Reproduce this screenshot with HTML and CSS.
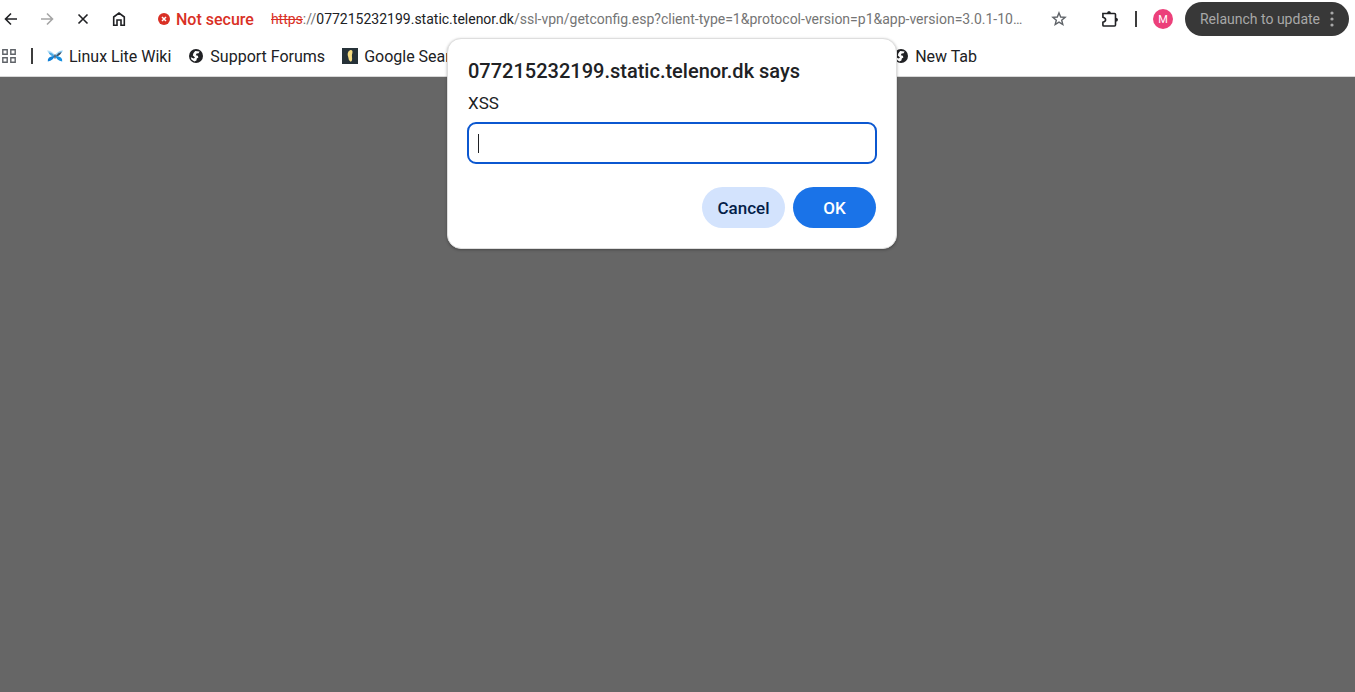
FILE: index.html
```html
<!DOCTYPE html>
<html lang="en">
  <head>
    <meta charset="UTF-8" />
    <meta name="viewport" content="width=device-width, initial-scale=1.0" />
    <title>077215232199.static.telenor.dk</title>
    <link rel="stylesheet" href="styles.css" />
  </head>

  <body>
    <svg class="sprite" aria-hidden="true">
      <symbol id="globe" viewBox="0 0 16 16">
        <circle cx="8" cy="8" r="7" fill="#202124" />
        <path
          d="M7.2 3L11.6 3.6L10.6 5.2L8.6 5.6L7.8 7.2L9.8 7.8L10.4 9.4L8.8 10.6L8.4 12.6L6.4 13.4L3.4 11.4L2.8 9.2L5.8 10.4L7 9.4L4.8 7.6L5.4 5.2Z"
          fill="#fff"
        />
      </symbol>
    </svg>

    <header class="browser">
      <div class="toolbar">
        <nav class="nav-buttons">
          <button class="icon-btn" aria-label="Back">
            <svg width="16" height="16" viewBox="0 0 16 16">
              <path d="M14 8H3M8 2.5L2.5 8L8 13.5" />
            </svg>
          </button>
          <button class="icon-btn icon-disabled" aria-label="Forward" disabled>
            <svg width="16" height="16" viewBox="0 0 16 16">
              <path d="M2 8H13M8 2.5L13.5 8L8 13.5" />
            </svg>
          </button>
          <button class="icon-btn" aria-label="Stop">
            <svg width="16" height="16" viewBox="0 0 16 16">
              <path d="M3.5 3.5L12.5 12.5M12.5 3.5L3.5 12.5" />
            </svg>
          </button>
          <button class="icon-btn" aria-label="Home">
            <svg width="16" height="16" viewBox="0 0 16 16">
              <path d="M2.7 6L8 2L13.3 6V14.2H10V9H6V14.2H2.7Z" />
            </svg>
          </button>
        </nav>

        <div class="address">
          <button class="security">
            <svg width="12" height="12" viewBox="0 0 12 12">
              <circle cx="6" cy="6" r="6" fill="#d93025" />
              <path d="M4 4L8 8M8 4L4 8" stroke="#fff" stroke-width="1.5" />
            </svg>
            Not secure
          </button>
          <p class="url"><s>https</s>://<span class="url-host">077215232199.static.telenor.dk</span>/ssl-vpn/getconfig.esp?client-type=1&amp;protocol-version=p1&amp;app-version=3.0.1-10…</p>
          <button class="icon-btn icon-star" aria-label="Bookmark this tab">
            <svg width="16" height="16" viewBox="0 0 16 16">
              <path
                d="M8 1.9L9.7 6L14.1 6.3L10.7 9.2L11.8 13.6L8 11.2L4.2 13.6L5.3 9.2L1.9 6.3L6.3 6Z"
              />
            </svg>
          </button>
        </div>

        <div class="actions">
          <button class="icon-btn" aria-label="Extensions">
            <svg width="18" height="18" viewBox="0 0 18 18">
              <path
                d="M2 3.5H13.5Q14.5 3.5 14.5 4.5V15Q14.5 16 13.5 16H2.7Q1.9 16 1.9 15.2V12.2Q4.6 11.6 4.6 9.7Q4.6 7.8 1.9 7.2V3.5Z"
              />
              <path
                class="solid"
                d="M6 3.5Q6 1 8 1Q10 1 10 3.5ZM14.5 7.7Q17 7.7 17 9.7Q17 11.7 14.5 11.7Z"
              />
            </svg>
          </button>
          <span class="divider"></span>
          <button class="avatar">M</button>
          <button class="relaunch">
            Relaunch to update
            <svg width="4" height="16" viewBox="0 0 4 16">
              <circle cx="2" cy="2" r="1.6" />
              <circle cx="2" cy="8" r="1.6" />
              <circle cx="2" cy="14" r="1.6" />
            </svg>
          </button>
        </div>
      </div>

      <nav class="bookmarks">
        <button class="icon-btn icon-apps" aria-label="Apps">
          <svg width="14" height="14" viewBox="0 0 14 14">
            <path
              d="M.8 .8H5.2V5.2H.8ZM8.8 .8H13.2V5.2H8.8ZM.8 8.8H5.2V13.2H.8ZM8.8 8.8H13.2V13.2H8.8Z"
            />
          </svg>
        </button>
        <span class="divider"></span>
        <a class="bookmark" href="#">
          <svg width="16" height="16" viewBox="0 0 16 16">
            <path d="M0 2.6Q5 2.6 8 7.6Q3 8.4 0 2.6Z" fill="#b5def7" />
            <path d="M1.6 4.4Q5.4 4.6 8 8.4Q3.4 8.6 1.6 4.4Z" fill="#49a8e4" />
            <path d="M16 2.6Q11 2.6 8 7.6Q13 8.4 16 2.6Z" fill="#8fcdf2" />
            <path d="M14.6 4Q11.4 4.4 8.4 8.4Q12.8 8.6 14.6 4Z" fill="#3a5168" />
            <path d="M.8 13.6Q0 8.6 7.6 7.8Q6.6 12.6 .8 13.6Z" fill="#0f7fd6" />
            <path d="M15.2 13.6Q16 8.6 8.4 7.8Q9.4 12.6 15.2 13.6Z" fill="#1590e2" />
            <path d="M7.4 6.4H8.6V10.4H7.4Z" fill="#1f3650" />
          </svg>
          Linux Lite Wiki
        </a>
        <a class="bookmark" href="#">
          <svg width="16" height="16"><use href="#globe" /></svg>
          Support Forums
        </a>
        <a class="bookmark bookmark-wide" href="#">
          <svg width="16" height="16" viewBox="0 0 16 16">
            <path d="M0 0H16V16H0Z" fill="#263238" />
            <path
              d="M8.6 2Q11 1.8 10.4 5Q9.6 7 10 9.2Q10.6 13.2 8.6 13.8Q6.4 13 6.4 9.8Q5.2 7.6 5.8 5Q6.4 2.4 8.6 2Z"
              fill="#f6dc82"
            />
          </svg>
          Google Search
        </a>
        <a class="bookmark" href="#">
          <svg width="16" height="16"><use href="#globe" /></svg>
          New Tab
        </a>
      </nav>
    </header>

    <main class="page"></main>

    <form class="prompt" role="dialog" aria-labelledby="prompt-title">
      <h1 class="prompt-title" id="prompt-title">
        077215232199.static.telenor.dk says
      </h1>
      <label class="prompt-label" for="prompt-input">XSS</label>
      <div class="prompt-field">
        <span class="caret"></span>
        <input type="text" id="prompt-input" autocomplete="off" />
      </div>
      <div class="prompt-buttons">
        <button type="button" class="btn btn-cancel">Cancel</button>
        <button type="submit" class="btn btn-ok">OK</button>
      </div>
    </form>
  </body>
</html>
```
FILE: styles.css
```css
* {
  box-sizing: border-box;
}

body {
  margin: 0;
  min-height: 100vh;
  display: flex;
  flex-direction: column;
  font-family: Roboto, sans-serif;
  font-size: 16px;
  color: #202124;
  background-color: #666666;
}

button,
input {
  font-family: inherit;
  border: 0;
  padding: 0;
  background: none;
}

svg {
  display: block;
  flex-shrink: 0;
}

.sprite {
  position: absolute;
  width: 0;
  height: 0;
}

.browser {
  background-color: #ffffff;
  border-bottom: 1px solid #d8d8d8;
}

.toolbar {
  display: flex;
  align-items: center;
  height: 38px;
  padding: 0 6px 0 3px;
}

.nav-buttons {
  display: flex;
  gap: 20px;
}

.icon-btn {
  fill: none;
  stroke: #202124;
  stroke-width: 1.6;
}

.icon-disabled {
  stroke: #a5a5a5;
}

.icon-star,
.icon-apps {
  stroke: #5f6368;
  stroke-width: 1.4;
}

.solid {
  fill: #202124;
  stroke: none;
}

.address {
  display: flex;
  flex: 1;
  align-items: center;
  min-width: 0;
  padding: 0 34px 0 31px;
}

.security {
  display: flex;
  align-items: center;
  gap: 6px;
  font-size: 16px;
  font-weight: 500;
  color: #d93025;
  white-space: nowrap;
}

.url {
  flex: 1;
  min-width: 0;
  margin: 0 16px 0 17px;
  overflow: hidden;
  font-size: 14px;
  color: #757575;
  white-space: nowrap;
}

.url s {
  color: #d93025;
}

.url-host {
  color: #202124;
}

.actions {
  display: flex;
  align-items: center;
}

.divider {
  width: 2px;
  height: 16px;
  background-color: #3c3c3c;
}

.actions .divider {
  margin: 0 16px;
}

.avatar {
  width: 20px;
  height: 20px;
  margin-right: 12px;
  border-radius: 50%;
  background-color: #ec407a;
  color: #ffffff;
  font-size: 11px;
}

.relaunch {
  display: flex;
  align-items: center;
  gap: 10px;
  height: 34px;
  padding: 0 15px;
  border-radius: 17px;
  background-color: #383838;
  color: #a8a8a8;
  fill: #a8a8a8;
  font-size: 14px;
  white-space: nowrap;
}

.bookmarks {
  display: flex;
  align-items: center;
  height: 38px;
  padding: 0 2px 2px;
  overflow: hidden;
}

.bookmarks .divider {
  margin: 0 14px 0 15px;
}

.bookmark {
  display: flex;
  flex-shrink: 0;
  align-items: center;
  gap: 6px;
  margin-right: 17px;
  color: #202124;
  text-decoration: none;
  white-space: nowrap;
}

.bookmark-wide {
  width: 534px;
}

.page {
  flex: 1;
}

.prompt {
  position: absolute;
  top: 38px;
  left: 447px;
  width: 450px;
  padding: 20px 19px;
  border: 1px solid #dedede;
  border-radius: 14px;
  background-color: #ffffff;
  box-shadow: 0 1px 3px rgba(0, 0, 0, 0.3);
}

.prompt-title {
  margin: 0 1px 10px;
  font-size: 20px;
  font-weight: 500;
  line-height: 24px;
}

.prompt-label {
  display: block;
  margin: 0 1px 9px;
  font-size: 17px;
  line-height: 20px;
}

.prompt-field {
  display: flex;
  align-items: center;
  height: 42px;
  padding: 0 9px;
  border: 2px solid #0b57d0;
  border-radius: 9px;
}

.caret {
  width: 1px;
  height: 19px;
  background-color: #202124;
}

.prompt-field input {
  flex: 1;
  min-width: 0;
  height: 100%;
  font-size: 17px;
  outline: none;
}

.prompt-buttons {
  display: flex;
  justify-content: flex-end;
  gap: 8px;
  margin: 23px 1px 0;
}

.btn {
  width: 83px;
  height: 41px;
  border-radius: 21px;
  font-size: 17px;
  font-weight: 500;
}

.btn-cancel {
  background-color: #d3e3fd;
  color: #041e49;
}

.btn-ok {
  background-color: #1a73e8;
  color: #ffffff;
}
```
